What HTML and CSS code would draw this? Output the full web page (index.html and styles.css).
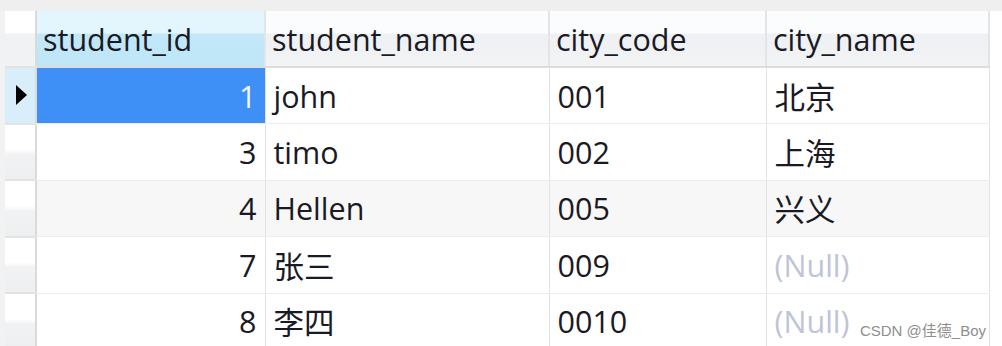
FILE: index.html
```html
<!DOCTYPE html>
<html lang="en">
<head>
    <meta charset="UTF-8">
    <title>students</title>
    <link rel="stylesheet" href="styles.css">
</head>
<body>
    <div class="topbar"></div>
    <div class="grid-wrap">
        <table class="grid">
            <thead>
                <tr>
                    <th class="rowhead"></th>
                    <th class="col-id active">student_id</th>
                    <th class="col-name">student_name</th>
                    <th class="col-code">city_code</th>
                    <th class="col-city">city_name</th>
                </tr>
            </thead>
            <tbody>
                <tr class="current">
                    <td class="rowhead"><span class="arrow"></span></td>
                    <td class="num selected">1</td>
                    <td>john</td>
                    <td>001</td>
                    <td>北京</td>
                </tr>
                <tr>
                    <td class="rowhead"></td>
                    <td class="num">3</td>
                    <td>timo</td>
                    <td>002</td>
                    <td>上海</td>
                </tr>
                <tr class="alt">
                    <td class="rowhead"></td>
                    <td class="num">4</td>
                    <td>Hellen</td>
                    <td>005</td>
                    <td>兴义</td>
                </tr>
                <tr>
                    <td class="rowhead"></td>
                    <td class="num">7</td>
                    <td>张三</td>
                    <td>009</td>
                    <td class="null">(Null)</td>
                </tr>
                <tr>
                    <td class="rowhead"></td>
                    <td class="num">8</td>
                    <td>李四</td>
                    <td>0010</td>
                    <td class="null">(Null)</td>
                </tr>
            </tbody>
        </table>
        <div class="watermark">CSDN @佳德_Boy</div>
    </div>
</body>
</html>
```

FILE: styles.css
```css
body {
    margin: 0;
    background-color: #FFFFFF;
    font-family: "Open Sans", "Noto Sans CJK SC", sans-serif;
    color: #1A1A24;
    overflow: hidden;
}

.topbar {
    height: 11px;
    background-color: #EFEFEF;
}

.grid-wrap {
    position: relative;
    height: 335px;
    padding-left: 5px;
    background: linear-gradient(to right, #F2F2F2 5px, #FFFFFF 5px);
}

.grid {
    border-collapse: collapse;
    table-layout: fixed;
    width: 984px;
    font-size: 30.5px;
}

.grid th,
.grid td {
    height: 56.5px;
    padding: 0 8px;
    border-right: 1px solid #E2E2E2;
    border-bottom: 1px solid #ECECEC;
    text-align: left;
    font-weight: normal;
    white-space: nowrap;
    overflow: hidden;
    box-sizing: border-box;
}

.grid th {
    height: 56px;
    padding-left: 6px;
    background: linear-gradient(to bottom, #FBFCFD 0%, #FBFCFD 40%, #EFF0F3 42%, #F2F3F5 100%);
    border-bottom: 2px solid #DCDCDC;
    border-right: 2px solid #E4E4E4;
}

.grid th.active {
    background: linear-gradient(to bottom, #E3F5FD 0%, #E3F5FD 40%, #C2E8F8 42%, #BEE6F7 100%);
}

.grid .rowhead {
    width: 31px;
    padding: 0;
    border-right: 2px solid #DADADA;
    border-bottom: 2px solid #E3E3E3;
}

.grid th.rowhead {
    background: linear-gradient(to bottom, #FFFFFF 0%, #FFFFFF 40%, #F1F2F4 42%, #F1F2F4 100%);
}

.grid .col-id { width: 229px; }
.grid .col-name { width: 284px; }
.grid .col-code { width: 217px; }
.grid .col-city { width: 223px; }

.grid td.num {
    text-align: right;
}

.grid tr.alt td {
    background-color: #F7F7F7;
}

.grid tr td.rowhead {
    background: linear-gradient(to bottom, #FFFFFF 0%, #FFFFFF 45%, #F1F2F4 55%, #EEEFF1 100%);
}

.grid tr.current td.rowhead {
    background: #D8EFFB;
}

.grid td.selected {
    background-color: #3E8FF6;
    color: #F2F7FF;
}

.grid td.null {
    color: #BFC3DA;
}

.arrow {
    display: block;
    width: 0;
    height: 0;
    margin-left: 11px;
    border-top: 10px solid transparent;
    border-bottom: 10px solid transparent;
    border-left: 11px solid #000000;
}

.watermark {
    position: absolute;
    right: 16px;
    bottom: 6px;
    font-family: "Liberation Sans", "Noto Sans CJK SC", sans-serif;
    font-size: 15px;
    color: #8E8E8E;
    background-color: rgba(255, 255, 255, 0.6);
}
```
